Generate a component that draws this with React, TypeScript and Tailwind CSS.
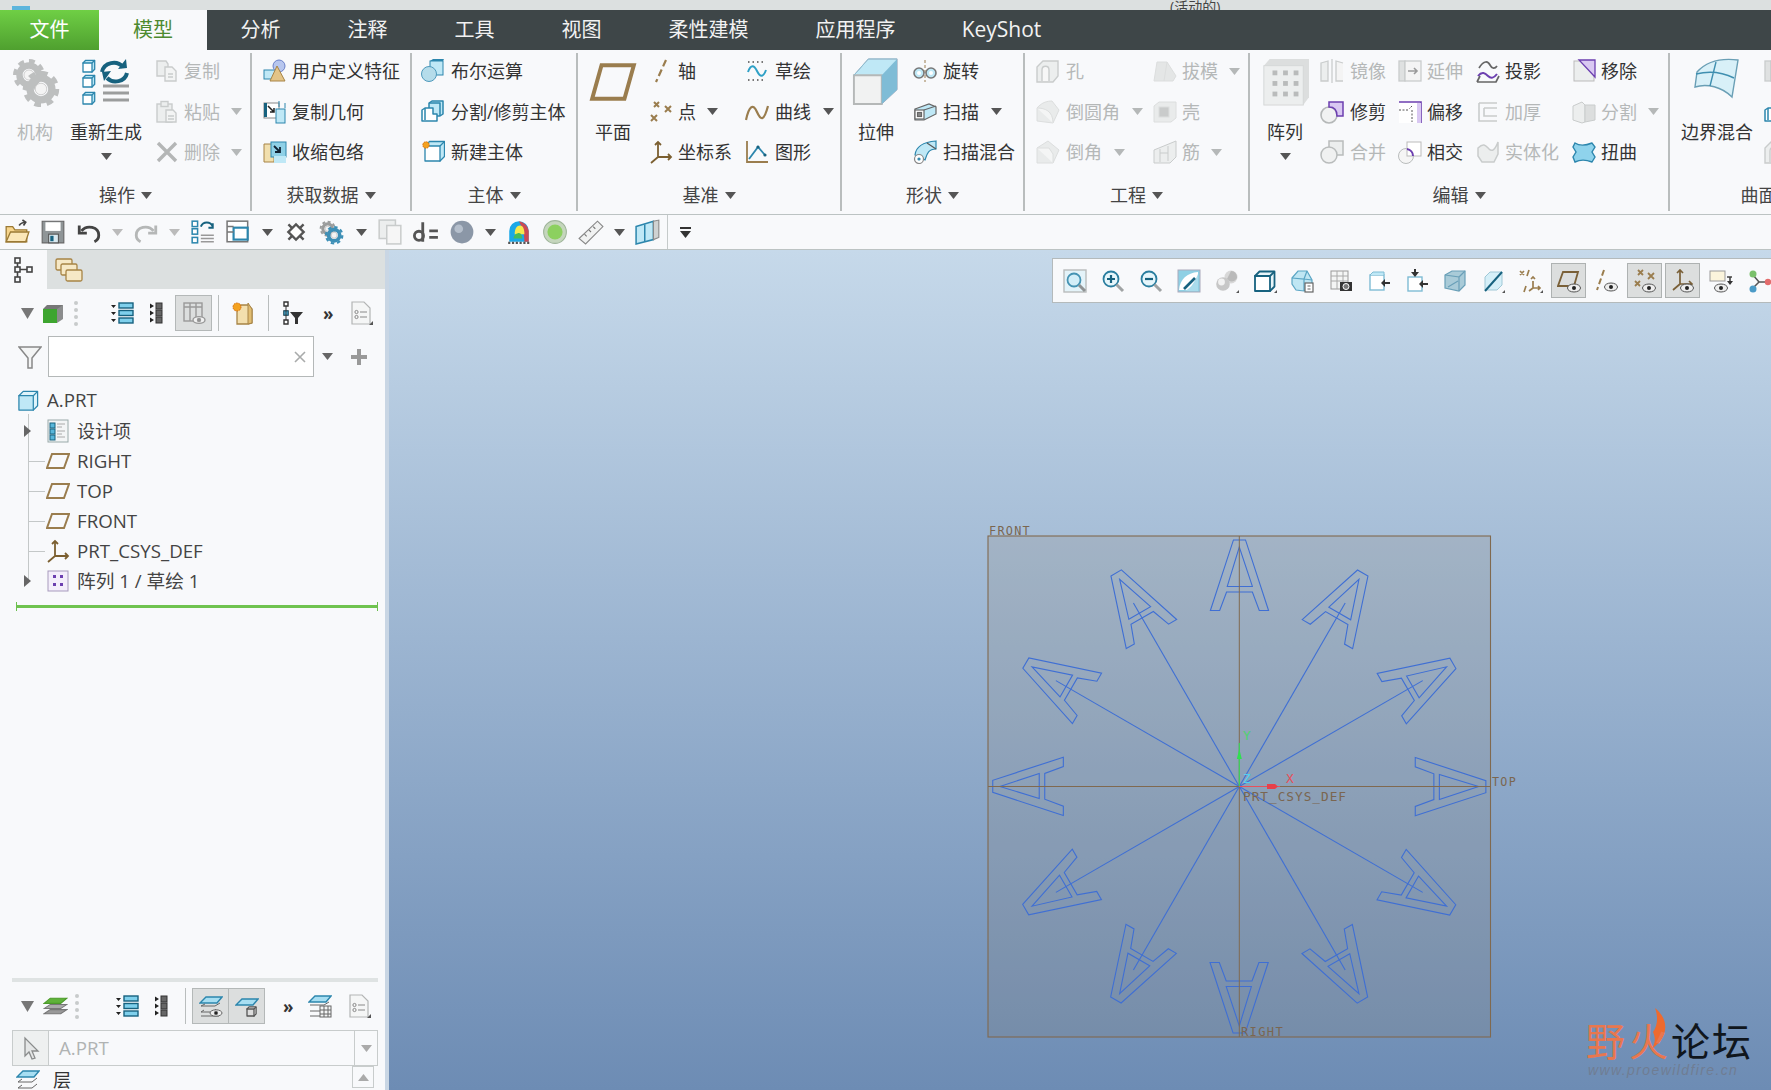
import React from "react";

const BL = "#2c86ad", DB = "#17627f", LB = "#bfe8f6", GR = "#c9cccc", LG = "#eceeee", BR = "#9a7d4e", PU = "#6c3fb0", LP = "#d9c8f2";

const S = ({ s = 24, v = 24, children }: { s?: number; v?: number; children: React.ReactNode }) => (
  <svg width={s} height={s} viewBox={`0 0 ${v} ${v}`} className="shrink-0" fill="none">{children}</svg>
);

const Cube = ({ x, y, w, f = "#fff", st = BL, t = LB, sw = 1.3 }: { x: number; y: number; w: number; f?: string; st?: string; t?: string; sw?: number }) => {
  const d = w * 0.3;
  return (
    <g stroke={st} strokeWidth={sw} strokeLinejoin="round">
      <path d={`M${x} ${y}l${d} ${-d}h${w}v${w}l${-d} ${d}z`} fill={t} />
      <rect x={x} y={y} width={w} height={w} fill={f} />
      <path d={`M${x + w} ${y}l${d} ${-d}`} />
    </g>
  );
};

const Caret = ({ c = "#555" }: { c?: string }) => (
  <svg width="11" height="7" viewBox="0 0 11 7" className="shrink-0"><path d="M0 0h11L5.5 7z" fill={c} /></svg>
);

const Gear = ({ x, y, r, c = "#bdbfbf" }: { x: number; y: number; r: number; c?: string }) => (
  <g>
    <circle cx={x} cy={y} r={r} stroke={c} strokeWidth={r * 0.28} strokeDasharray={`${r * 0.42} ${r * 0.36}`} />
    <circle cx={x} cy={y} r={r * 0.68} stroke={c} strokeWidth={r * 0.46} />
    <circle cx={x} cy={y} r={r * 0.36} fill="#f4f4f4" stroke="#d0d0d0" />
  </g>
);

const Corner = () => <path d="M24 21v3h-3z" fill="#555" />;

const icons: Record<string, React.ReactNode> = {
  copy: <g stroke={GR} strokeWidth="1.4" fill={LG}><path d="M2 2h9l2 3v12H2z" /><path d="M10 8h7l4 4v10H10z" fill="#f3f4f4" /><path d="M13 15h5M13 18h5" /></g>,
  paste: <g stroke={GR} strokeWidth="1.4" fill={LG}><rect x="2" y="4" width="15" height="18" /><rect x="6" y="1.5" width="7" height="5" /><path d="M11 10h7l3 3v9H11z" fill="#f3f4f4" /><path d="M13 16h6M13 19h6" /></g>,
  del: <path d="M3 3l18 18M21 3L3 21" stroke="#b4b6b6" strokeWidth="3.4" />,
  udf: <g><rect x="1" y="11" width="12" height="9" fill={LB} stroke={BL} /><circle cx="16" cy="7" r="6" fill="#b7c6ee" stroke="#6a80c8" /><path d="M14 7L7 22h15z" fill="#e3c487" stroke="#a78446" /></g>,
  cgeom: <g><rect x="1" y="3" width="15" height="15" fill="#fff" stroke="#888" /><path d="M5 6l6 6M11 8v4H7" stroke="#222" strokeWidth="1.5" /><path d="M1 3v14h3V3z" fill={DB} /><rect x="13" y="9" width="9" height="14" fill={LB} stroke={BL} /><path d="M16 1v6M22 3v5" stroke={BL} /></g>,
  shrink: <g><path d="M1 4h10v18H1z" fill="#f1dfae" stroke="#a78446" /><rect x="8" y="2" width="15" height="15" fill="#8fd0e6" stroke={BL} /><path d="M11 6l6 6M17 7v5h-5" stroke="#123" strokeWidth="1.8" /><rect x="11" y="16" width="12" height="7" fill={LB} /></g>,
  bool: <g><rect x="9" y="2" width="13" height="14" fill={LB} stroke={BL} /><path d="M9 2l3-2h11l-1 2z" fill={BL} /><circle cx="8" cy="15" r="7.5" fill="#b5dcea" stroke="#4f9abc" /></g>,
  split: <g stroke={BL} strokeWidth="1.5" strokeLinejoin="round"><path d="M8 3l3-2h11v13l-3 2H8z" fill={LB} /><path d="M1 10l3-2h8v6l4 0v7H1z" fill="#fff" /><path d="M4 8v12M8 3h11v13" /></g>,
  newb: <g><Cube x={4} y={6} w={15} /><circle cx="5" cy="5" r="3.2" fill="#f4a21f" stroke="#d36b12" strokeDasharray="1.5 1" /></g>,
  axis: <path d="M17 1l-10 22" stroke={BR} strokeWidth="2.2" strokeDasharray="7 3.5" />,
  pt: <g stroke={BR} strokeWidth="2"><path d="M5 2l5 5M10 2l-5 5M16 6l6 6M22 6l-6 6M2 15l6 6M8 15l-6 6" /></g>,
  csys: <g stroke="#7b5f30" strokeWidth="1.8"><path d="M9 2v15L22 17M9 17L2 23" /><path d="M6 5l3-3 3 3" /><path d="M19 14l3 3-3 3" /></g>,
  sketch: <g><path d="M3 3h18M3 21h18M3 12h1M20 12h1" stroke="#777" strokeWidth="2" strokeDasharray="1.5 3" /><path d="M3 13c3-8 6-7 9-1s6 7 9-1" stroke="#2ea0c6" strokeWidth="2" /></g>,
  curve: <path d="M1 20C4 6 8 3 12 12s7 9 11-6" stroke={BR} strokeWidth="2.2" />,
  graph: <g><path d="M2 1v21h21" stroke={BR} strokeWidth="1.8" /><path d="M4 19l9-12 7 8" stroke={BL} strokeWidth="1.8" /><circle cx="13" cy="7" r="1.6" fill={DB} /><circle cx="20" cy="15" r="1.6" fill={DB} /></g>,
  rev: <g><path d="M12 1v22" stroke="#9a7d4e" strokeDasharray="3 2" /><ellipse cx="6" cy="14" rx="5" ry="5" fill={LB} stroke="#777" strokeWidth="1.6" /><ellipse cx="18" cy="14" rx="5" ry="5" fill={LB} stroke="#777" strokeWidth="1.6" /><circle cx="6" cy="14" r="2" fill="#fff" /><circle cx="18" cy="14" r="2" fill="#fff" /></g>,
  sweep: <g stroke="#666" strokeWidth="1.2"><path d="M2 9l14-5 7 3v7l-12 6H2z" fill={LB} /><rect x="2" y="10" width="9" height="9" fill="#fff" /><rect x="4.5" y="12.5" width="4" height="4" fill="#888" /><path d="M11 10l12-4" /></g>,
  swb: <g stroke={BL} strokeWidth="1.2"><path d="M2 15C3 6 10 2 23 1v8c-8 0-9 5-11 11z" fill={LB} /><circle cx="6" cy="19" r="4.5" fill="#fff" stroke="#888" /><circle cx="6" cy="19" r="1" fill="#888" /><path d="M14 3l9 6" stroke="#555" /></g>,
  hole: <g stroke={GR} strokeWidth="1.4" fill={LG}><path d="M1 8l6-6h15v15l-5 6H1z" /><path d="M6 22V11c0-5 7-5 7 0v11" fill="#f7f7f7" /></g>,
  round: <g stroke="#dcdede" fill="#e9ebeb"><path d="M1 8C6 2 12 1 16 1l7 9-6 13L1 21z" /><path d="M1 8c8 0 16 3 16 15" fill="#f4f5f5" /></g>,
  cham: <g stroke="#dcdede" fill="#e9ebeb"><path d="M1 8l11-7 11 9-6 13H1z" /><path d="M1 8h12l4 6v9" fill="#f4f5f5" /></g>,
  draft: <g stroke="#dcdede" fill="#e4e6e6"><path d="M4 3h10l9 14-3 5H1z" /><path d="M14 3l-3 19" /></g>,
  shell: <g stroke="#dcdede" fill="#e9ebeb"><path d="M1 6l5-4h17v16l-5 4H1z" /><rect x="6" y="7" width="10" height="10" fill="#c9cbcb" /></g>,
  rib: <g stroke={GR} fill="#eceeee"><path d="M1 10l22-9v16l-6 6H1z" /><path d="M7 9v13M15 6v15M7 13l8 0" /></g>,
  mirror: <g stroke={GR} strokeWidth="1.3"><path d="M1 4l7-2v20H1z" fill={LG} /><path d="M12 0v24" /><path d="M23 4l-7-2v20h7" fill="#f4f4f4" /></g>,
  extend: <g stroke={GR} strokeWidth="1.3"><rect x="1" y="2" width="6" height="20" fill="#dfe1e1" /><rect x="7" y="2" width="16" height="20" fill="#f4f4f4" /><path d="M10 12h9M16 9l3 3-3 3" stroke="#9a9a9a" strokeWidth="1.6" /></g>,
  project: <g strokeWidth="1.7"><path d="M3 9C8 1 12 2 14 6s5 4 7 1" stroke="#666" /><path d="M2 17c4-5 7-3 10 0s6 2 9-2" stroke={PU} strokeWidth="2" /><path d="M1 23l3-6M23 17l-3 6H1" stroke="#666" /></g>,
  remove: <g><rect x="2" y="2" width="20" height="20" fill={LG} stroke="#bbb" /><path d="M7 1h16v17z" fill={LP} stroke={PU} strokeWidth="1.3" /></g>,
  trim: <g><circle cx="9" cy="15" r="8" stroke="#b5b8b8" strokeWidth="1.6" fill="#f1f2f2" /><path d="M9 2h14v14H17C17 10 14 7 9 7z" fill={LP} stroke={PU} strokeWidth="1.5" /></g>,
  offs: <g><rect x="1" y="2" width="22" height="21" fill="#fff" /><path d="M1 2h22v21" stroke={PU} strokeWidth="1.6" /><rect x="19" y="3" width="4" height="20" fill={LP} /><path d="M1 10h10M14 6l-3 3M14 10v12" stroke="#555" strokeDasharray="2 1.5" /></g>,
  thick: <path d="M3 3h18M3 3v18h18M8 8h13M8 8v8h13" stroke={GR} strokeWidth="1.6" />,
  sgeom: <g stroke={GR} fill={LG}><path d="M1 6l9-4 3 3v17l-3 1-9-3z" /><path d="M13 5l10 0v15l-10 2z" fill="#dcdede" /></g>,
  merge: <g stroke="#b9bcbc" strokeWidth="1.5"><rect x="9" y="1" width="14" height="14" fill={LG} /><circle cx="9" cy="15" r="8" fill="#f0f1f1" /></g>,
  inter: <g><circle cx="8" cy="16" r="7.5" stroke="#b9bcbc" fill="#f5f5f5" /><rect x="9" y="2" width="14" height="14" fill="#fff" stroke="#bbb" /><path d="M9 9a7 7 0 0 1 6 7" stroke={PU} strokeWidth="2" /></g>,
  solid: <g stroke={GR} strokeWidth="1.5"><path d="M2 8C8 2 10 6 13 9s6 1 9-7v12l-4 8H6L2 16z" fill={LG} /></g>,
  warp: <path d="M3 3c6 4 12 2 17 0l3 4-3 5 3 5-3 5c-5-2-11-3-17 0l-2-5 3-5-3-5z" fill="#8fd3ec" stroke={BL} strokeWidth="1.4" />,
  open: <g><path d="M2 7h6l2 3h11v11H2z" fill="#f7d58c" stroke="#9b7a35" strokeWidth="1.2" /><path d="M2 21l4-9h17l-3 9z" fill="#fbe7b8" stroke="#9b7a35" strokeWidth="1.2" /><path d="M14 6c2-3 4-3 6-3M17 1l3 2-2 3" stroke="#444" strokeWidth="1.6" /></g>,
  save: <g><path d="M2 2h20v20H2z" fill="#8f9597" stroke="#666" /><rect x="5" y="3" width="14" height="8" fill="#fff" /><rect x="8" y="14" width="9" height="8" fill="#d9e9f0" stroke="#555" /><rect x="9.5" y="15.5" width="3" height="5" fill={DB} /></g>,
  undo: <g stroke="#444" strokeWidth="2.6"><path d="M5 11c5-6 16-4 16 4 0 3-2 5-4 6" /><path d="M3 6v7h7" /></g>,
  redo: <g stroke="#b5b7b7" strokeWidth="2.6"><path d="M19 11C14 5 3 7 3 15c0 3 2 5 4 6" /><path d="M21 6v7h-7" /></g>,
  regen: <g><rect x="2" y="2" width="5" height="5" fill="#fff" stroke={BL} strokeWidth="1.4" /><rect x="2" y="9" width="5" height="5" fill="#fff" stroke={BL} strokeWidth="1.4" /><rect x="2" y="17" width="5" height="5" fill="#fff" stroke={BL} strokeWidth="1.4" /><path d="M10 7c2-5 9-5 11 0M21 4v4h-4" stroke={DB} strokeWidth="1.8" /><path d="M10 15h12M10 18h12M10 21h12" stroke="#999" strokeWidth="1.4" /></g>,
  win: <g stroke="#777" strokeWidth="1.4"><rect x="1" y="2" width="19" height="19" fill="#fff" /><rect x="7" y="8" width="13" height="11" fill="#fff" stroke={BL} strokeWidth="2" /><path d="M1 7h6M1 12h6" /></g>,
  xclose: <g stroke="#555" strokeWidth="2.2"><path d="M5 5l14 14M19 5L5 19" /><rect x="7" y="7" width="10" height="10" fill="#fff" stroke="#555" transform="rotate(45 12 12)" /></g>,
  sets: <g><Gear x={8} y={9} r={6.5} c="#9a9c9c" /><Gear x={14} y={15} r={7.5} c="#3d8fb6" /></g>,
  cdoc: <g stroke={GR} strokeWidth="1.4"><rect x="2" y="1" width="15" height="17" fill={LG} /><rect x="9" y="6" width="13" height="17" fill="#f6f6f6" /></g>,
  deq: <g stroke="#555" strokeWidth="2.6"><path d="M9 3v18" /><circle cx="5.5" cy="15.5" r="4.2" /><path d="M15 11h8M15 17h8" /></g>,
  sph: <g><circle cx="12" cy="12" r="10.5" fill="#8b97a7" /><circle cx="9" cy="9" r="4" fill="#b5bfcc" /></g>,
  color: <g><path d="M3 21V11a9 9 0 0 1 18 0v10z" fill="#1ba8e8" /><path d="M12 2c5 1 8 4 9 9v10h-4c0-8-2-13-5-19z" fill="#ea3a3a" opacity=".85" /><path d="M8 14c0-5 2-8 5-8 3 0 4 4 4 8z" fill="#f6e84e" /><path d="M7 18c0-3 3-5 5-5 2 0 3 3 3 5z" fill="#47bb5a" /><path d="M2 22h20" stroke="#555" strokeWidth="2" strokeDasharray="2 1.5" /></g>,
  gsph: <g><circle cx="12" cy="12" r="10.5" fill="#c5d6bd" stroke="#9fb59a" /><circle cx="12" cy="12" r="7" fill="#8cd05f" /></g>,
  ruler: <g><path d="M1 18L18 2l5 5L7 23z" fill="#f1f2f2" stroke="#888" /><path d="M6 14l2 2M10 10l2 2M14 7l2 2" stroke="#777" /></g>,
  vcube: <g><path d="M1 7l16-5v17L1 23z" fill={LB} stroke={BL} strokeWidth="1.4" /><path d="M9 5v16" stroke={BL} strokeWidth="1.4" /><path d="M17 2l5-1v16l-5 2z" fill="#cfd2d2" stroke="#888" /></g>,
  part: <Cube x={2} y={7} w={15} f={LB} t="#dff4fb" />,
  design: <g><rect x="2" y="1" width="20" height="22" fill="#f3f5f6" stroke="#9aa" /><rect x="4" y="4" width="5" height="5" fill="#58b6da" stroke={DB} /><rect x="4" y="10" width="5" height="5" fill="#58b6da" stroke={DB} /><rect x="4" y="16" width="5" height="5" fill="#58b6da" stroke={DB} /><path d="M11 5h8M11 8h5M11 12h8M11 15h5M11 18h8" stroke="#aaa" /></g>,
  plane: <path d="M6 5H23L18 19H1z" stroke={BR} strokeWidth="2" />,
  pat: <g><rect x="2" y="2" width="20" height="20" fill="#f4eefb" stroke="#a79bbd" /><path d="M7 6h3v3H7zM14 6h3v3h-3zM7 14h3v3H7zM14 14h3v3h-3z" fill="#6c3fb0" /></g>,
  tree1: <g><path d="M1 4h5L3.5 7zM1 11h5L3.5 14zM1 18h5L3.5 21z" fill="#222" /><rect x="9" y="2" width="14" height="5" fill="#7fd0ec" stroke={DB} strokeWidth="1.4" /><rect x="9" y="9.5" width="14" height="5" fill="#7fd0ec" stroke={DB} strokeWidth="1.4" /><rect x="9" y="17" width="14" height="5" fill="#7fd0ec" stroke={DB} strokeWidth="1.4" /></g>,
  tree2: <g><path d="M5 2.5L9 5l-4 2.5zM5 9.5L9 12l-4 2.5zM5 16.5L9 19l-4 2.5z" fill="#222" /><rect x="11" y="2" width="6" height="6" fill="#666" stroke="#333" /><rect x="11" y="9" width="6" height="6" fill="#666" stroke="#333" /><rect x="11" y="16" width="6" height="6" fill="#666" stroke="#333" /></g>,
  cols: <g stroke="#999" strokeWidth="1.4"><rect x="2" y="2" width="18" height="18" fill="#dcdede" /><path d="M2 6h18M8 2v18M14 2v18" /><ellipse cx="17" cy="19" rx="6" ry="3.4" fill="#f0f0f0" /><circle cx="17" cy="19" r="1.5" fill="#888" /></g>,
  star: <g><path d="M6 4h11l4 4v14l-4 1H6z" fill="#f3dfae" stroke="#a78446" strokeWidth="1.3" /><path d="M17 2l4 6v14l-4 1z" fill="#e1bd72" stroke="#a78446" /><circle cx="6" cy="6" r="4" fill="#f4a21f" stroke="#d36b12" strokeDasharray="1.5 1" /></g>,
  tfilter: <g><path d="M4 1h4v4H4zM4 10h4v4H4zM4 19h4v4H4z" fill="#fff" stroke="#333" strokeWidth="1.4" /><rect x="4" y="10" width="4" height="4" fill="#58b6da" stroke={DB} /><path d="M6 5v14" stroke="#333" /><path d="M10 11h13l-5 6v6h-3v-6z" fill="#333" /></g>,
  doc: <g><path d="M3 1h12l6 6v16H3z" fill="#f5f6f6" stroke="#b3b5b5" strokeWidth="1.2" /><circle cx="7.5" cy="11" r="1.6" stroke="#888" /><circle cx="7.5" cy="16" r="1.6" stroke="#888" /><path d="M11 11h7M11 16h7" stroke="#888" /><path d="M24 20v4h-4z" fill="#555" /></g>,
  funnel: <g stroke="#888" strokeWidth="1.5"><path d="M1 2h22l-9 11v10h-4V13z" fill="#f4f5f5" /></g>,
  layers: <g><path d="M1 19l6-4h16l-6 4z" fill="#999" stroke="#777" /><path d="M1 14l6-4h16l-6 4z" fill="#aaa" stroke="#777" /><path d="M1 9l6-5h16l-6 5z" fill="#5fb23a" stroke="#4b9a2a" /></g>,
  l1: <g stroke="#666"><path d="M1 9l6-6h16l-5 6z" fill="#a7def2" stroke={BL} strokeWidth="1.4" /><path d="M2 12h14l5-3M2 12l4-2M2 18h12l3-3M2 18l3-2M2 22h18" /><ellipse cx="17" cy="19" rx="6" ry="3.2" fill="#eee" /><circle cx="17" cy="19" r="1.7" fill="#222" /></g>,
  l2: <g><path d="M1 11l6-6h16l-5 6z" fill="#a7def2" stroke={BL} strokeWidth="1.4" /><Cube x={12} y={15} w={7} f="#ddd" st="#555" t="#eee" /></g>,
  l3: <g stroke="#666"><path d="M1 8l6-6h16l-5 6z" fill="#a7def2" stroke={BL} strokeWidth="1.4" /><path d="M2 11h14l5-3M2 17h10M2 22h10" /><rect x="12" y="12" width="11" height="11" fill="#f4f5f5" /><path d="M12 16h11M12 20h11M16 12v11M20 12v11" /></g>,
  layerRow: <g stroke="#666"><path d="M1 8l6-6h16l-5 6z" fill="#a7def2" stroke={BL} strokeWidth="1.4" /><path d="M2 13h14l5-4M2 13l4-3M2 19h14l5-4M2 19l4-3" /></g>,
  arrow: <path d="M6 2v18l4-4 3 7 3-1-3-7h6z" fill="#e4e6e6" stroke="#8a8c8c" strokeWidth="1.3" />,
  fit: <g><rect x="1" y="1" width="22" height="22" fill="#e4f3f9" stroke="#b9bcbc" strokeWidth="1.4" /><circle cx="11" cy="11" r="6.5" fill="#d3eef8" stroke="#4593b3" strokeWidth="1.8" /><path d="M16 16l6 6" stroke="#8f9293" strokeWidth="3" /></g>,
  zin: <g><circle cx="10" cy="10" r="7.5" fill="#e6f6fb" stroke="#2a7e9f" strokeWidth="1.8" /><path d="M15.5 15.5L22 22" stroke="#a0a3a4" strokeWidth="3" /><path d="M6 10h8M10 6v8" stroke={DB} strokeWidth="2.2" /></g>,
  zout: <g><circle cx="10" cy="10" r="7.5" fill="#e6f6fb" stroke="#2a7e9f" strokeWidth="1.8" /><path d="M15.5 15.5L22 22" stroke="#a0a3a4" strokeWidth="3" /><path d="M6 10h8" stroke={DB} strokeWidth="2.2" /></g>,
  rep: <g><rect x="1" y="1" width="22" height="22" fill="#8fd0e4" stroke="#aab" /><path d="M2 21C3 10 10 4 21 3v18z" fill="#fff" /><path d="M21 5L21 22H7c5-1 10-7 14-17z" fill="#a9dcec" /><path d="M7 20L18 9" stroke={DB} strokeWidth="2.6" /></g>,
  shade: <g><circle cx="16" cy="8" r="6.5" fill="#d8d8d8" /><path d="M16 2c4 0 6 3 6 7-3 5-8 4-10 1" fill="#9b9b9b" opacity=".5" /><circle cx="8" cy="15" r="6.8" fill="#c7c7c7" /><circle cx="6.5" cy="13" r="3.4" fill="#f2f2f2" /><Corner /></g>,
  view: <g><Cube x={2} y={7} w={15} st={DB} t="#e8f5f9" sw={1.8} /><Corner /></g>,
  nview: <g stroke="#5aa5c4" strokeWidth="1.2"><path d="M1 9l6-7h9l5 9v7l-8 4-8-1-4-6z" fill="#bfe6f3" /><path d="M1 9l12 1 3-8M13 10l8 1M13 10v12" /><rect x="14" y="14" width="8" height="9" fill="#fff" stroke="#666" /><path d="M16.5 17h3M16.5 20h3" stroke="#666" /></g>,
  snap: <g><rect x="2" y="2" width="17" height="18" fill="#f4f5f5" stroke="#999" /><path d="M2 7h17M2 12h17M8 2v18M14 2v18" stroke="#aaa" /><rect x="11" y="13" width="12" height="9" fill="#333" /><circle cx="17" cy="17.5" r="3" fill="#777" stroke="#fff" /></g>,
  pers1: <g><rect x="3" y="6" width="14" height="15" fill="#fff" stroke="#7fbcd4" strokeWidth="1.4" /><path d="M3 6l3-3h11v3" fill={LB} stroke="#7fbcd4" /><path d="M15 14h8" stroke="#333" strokeWidth="2" /><path d="M18 10l-4 4 4 4" fill="#333" /></g>,
  pers2: <g><rect x="3" y="8" width="14" height="14" fill="#fff" stroke="#7fbcd4" strokeWidth="1.4" /><path d="M15 15h8" stroke="#333" strokeWidth="2" /><path d="M18 11l-4 4 4 4" fill="#333" /><path d="M10 0v6" stroke="#333" strokeWidth="2" /><path d="M6 3l4 5 4-5" fill="#333" /></g>,
  glass: <g stroke="#6aa0b8" strokeWidth="1.2"><path d="M2 6l7-4h13v14l-6 6-14-3z" fill="#a9cbd8" /><path d="M2 6l14 2v14M16 8l6-6M5 18l10-6" /></g>,
  vsec: <g><path d="M4 8l5-5h12v13l-5 5H4z" fill="#d5eff8" stroke="#9fc8d6" /><path d="M4 22L21 3" stroke={DB} strokeWidth="2" /><Corner /></g>,
  xyz: <g stroke={BR} strokeWidth="1.7"><path d="M1 2l4 4M5 2L1 6M10 1L8 7M5 23l2-6M14 12v7l7 0M14 19l-4 3M12 10l2-2 2 2M19 17l2 2-2 2" /><path d="M24 21v3h-3z" fill="#555" stroke="none" /></g>,
  eyeP: <g><path d="M6 3h15l-4 14H1z" stroke="#7a6038" strokeWidth="1.8" /><ellipse cx="17" cy="19" rx="6.5" ry="4" fill="#eee" stroke="#555" /><circle cx="17" cy="19" r="2" fill="#222" /></g>,
  eyeA: <g><path d="M9 1l-7 20" stroke={BR} strokeWidth="2" strokeDasharray="6 3" /><ellipse cx="16" cy="18" rx="6.5" ry="4" fill="#eee" stroke="#555" /><circle cx="16" cy="18" r="2" fill="#222" /></g>,
  eyeX: <g><path d="M5 1l5 5M10 1L5 6M15 4l6 6M21 4l-6 6M2 12l5 5M7 12l-5 5" stroke={BR} strokeWidth="1.8" /><ellipse cx="16" cy="19" rx="6.5" ry="4" fill="#eee" stroke="#555" /><circle cx="16" cy="19" r="2" fill="#222" /></g>,
  eyeC: <g><path d="M9 1v14L2 21M9 15h11M6 4l3-3 3 3M18 12l3 3-3 3" stroke="#7a6038" strokeWidth="1.7" /><ellipse cx="16" cy="19" rx="6.5" ry="4" fill="#eee" stroke="#555" /><circle cx="16" cy="19" r="2" fill="#222" /></g>,
  ann: <g><rect x="1" y="2" width="15" height="10" fill="#fbf4dc" stroke="#999" /><path d="M18 8h5M21 8v5" stroke="#444" strokeWidth="1.6" /><path d="M18 12l3 4 3-4" fill="#333" /><ellipse cx="12" cy="19" rx="6.5" ry="4" fill="#eee" stroke="#555" /><circle cx="12" cy="19" r="2" fill="#222" /></g>,
  node: <g><path d="M6 6l6 7-6 6M12 13h9" stroke="#555" strokeWidth="1.5" /><circle cx="6" cy="5" r="3.5" fill="#7ac06b" /><circle cx="21" cy="13" r="3.2" fill="#e36c6c" /><circle cx="6" cy="20" r="3.5" fill="#4b9bc7" /></g>,
};

const I = ({ n, s = 24 }: { n: string; s?: number }) => <S s={s}>{icons[n]}</S>;

const Row = ({ n, t, dis, caret, gap = "gap-[5px]", cg = "ml-[6px]" }: { n: string; t: string; dis?: boolean; caret?: boolean; gap?: string; cg?: string }) => (
  <div className={`flex items-center h-[36px] ${gap} ${dis ? "text-[#b5b8b8]" : "text-[#333]"}`}>
    <I n={n} />
    {t ? <span className="whitespace-nowrap leading-[24px]">{t}</span> : null}
    {caret && <div className={cg}><Caret c={dis ? "#b5b8b8" : "#555"} /></div>}
  </div>
);

const Col = ({ w, pl = "", children }: { w: string; pl?: string; children: React.ReactNode }) => (
  <div className={`flex flex-col gap-[4.5px] shrink-0 ${w} ${pl}`}>{children}</div>
);

const Big = ({ w, t, dis, caret, children }: { w: string; t: string; dis?: boolean; caret?: boolean; children: React.ReactNode }) => (
  <div className={`flex flex-col items-center shrink-0 ${w} ${dis ? "text-[#b5b8b8]" : "text-[#333]"}`}>
    <div className="h-[48px] mt-[5px] flex items-center justify-center">{children}</div>
    <div className="mt-[14px] h-[24px] leading-[24px] whitespace-nowrap">{t}</div>
    {caret && <div className="mt-[9px]"><Caret /></div>}
  </div>
);

const Group = ({ w, label, children, last }: { w: string; label: string; children: React.ReactNode; last?: boolean }) => (
  <div className={`${w} shrink-0 h-[158px] flex flex-col ${last ? "" : "border-r-2 border-[#b9bdbd]"}`}>
    <div className="flex-1 flex min-h-0">{children}</div>
    <div className="h-[32px] flex items-center justify-center gap-[6px] text-[#444]">
      <span className="leading-[24px]">{label}</span><Caret />
    </div>
  </div>
);

const tabs: [string, string][] = [["分析", "w-[107px]"], ["注释", "w-[107px]"], ["工具", "w-[107px]"], ["视图", "w-[107px]"], ["柔性建模", "w-[147px]"], ["应用程序", "w-[147px]"]];

const QBar = () => (
  <div className="h-[36px] shrink-0 bg-[#f8f9fb] border-y border-[#bcc3c3] flex items-center pl-[4px] gap-[10.05px]">
    <I n="open" s={26} /><I n="save" s={26} /><I n="undo" s={26} /><Caret c="#bbb" /><I n="redo" s={26} /><Caret c="#bbb" />
    <I n="regen" s={26} /><I n="win" s={26} /><Caret /><I n="xclose" s={26} /><I n="sets" s={26} /><Caret /><I n="cdoc" s={26} /><I n="deq" s={26} /><I n="sph" s={26} /><Caret /><I n="color" s={26} /><I n="gsph" s={26} /><I n="ruler" s={26} /><Caret /><I n="vcube" s={26} />
    <div className="w-px h-full bg-[#c5caca] -ml-[4px]" />
    <div className="flex flex-col items-center gap-[2px] ml-[2px]"><div className="w-[11px] h-[2px] bg-[#333]" /><Caret c="#333" /></div>
  </div>
);

const TreeRow = ({ n, t, exp, line = true, latin }: { n: string; t: string; exp?: boolean; line?: boolean; latin?: boolean }) => (
  <div className="h-[30px] flex items-center relative pl-[46px]">
    {line && <div className="absolute left-[28px] top-[15px] w-[17px] h-px bg-[#c4c8c8]" />}
    {exp && <div className="absolute left-[24px] top-[9px] w-0 h-0 border-y-[6px] border-y-transparent border-l-[7px] border-l-[#666]" />}
    <I n={n} s={24} />
    <span className={`ml-[7px] whitespace-nowrap ${latin ? "text-[18.7px]" : ""}`}>{t}</span>
  </div>
);

const Dots = () => <div className="flex flex-col gap-[3px]">{[0, 1, 2, 3].map(i => <div key={i} className="w-[4px] h-[4px] rounded-full bg-[#c8cbcb]" />)}</div>;

const Panel = () => (
  <div className="w-[389px] shrink-0 h-full flex flex-col bg-[#f8f9fb] border-r-4 border-[#c9d6e4] text-[#444] text-[18px] overflow-hidden">
    <div className="h-[39px] shrink-0 bg-[#dce0e0] flex">
      <div className="w-[47px] bg-[#f8f9fb] flex items-center justify-center">
        <svg width="20" height="26" viewBox="0 0 20 26" fill="none" stroke="#444" strokeWidth="1.6"><rect x="1" y="1" width="5" height="5" /><rect x="1" y="10" width="5" height="5" /><rect x="1" y="20" width="5" height="5" /><rect x="13" y="10" width="5" height="5" /><path d="M3.5 6v4M3.5 15v5M6 12.5h7" /></svg>
      </div>
      <div className="ml-[8px] flex items-center">
        <svg width="28" height="26" viewBox="0 0 28 26" stroke="#a78446" fill="#f6e8c6" strokeWidth="1.3"><rect x="1" y="2" width="16" height="11" rx="1.5" /><rect x="6" y="7" width="16" height="11" rx="1.5" /><rect x="11" y="13" width="16" height="11" rx="1.5" /></svg>
      </div>
    </div>
    <div className="h-[48px] shrink-0 flex items-center">
      <div className="ml-[21px]"><svg width="13" height="11" viewBox="0 0 13 11"><path d="M0 0h13L6.5 11z" fill="#777" /></svg></div>
      <div className="ml-[9px]"><svg width="21" height="21" viewBox="0 0 21 21"><path d="M0 6l4-4h16l-1 4z" fill="#777" /><rect x="0" y="6" width="14" height="14" fill="#3da52f" /><path d="M14 6l6-4v14l-6 4z" fill="#8b8d8d" /></svg></div>
      <div className="ml-[10px]"><Dots /></div>
      <div className="ml-[32px]"><I n="tree1" /></div>
      <div className="ml-[11px]"><I n="tree2" /></div>
      <div className="ml-[6px] w-[37px] h-[36px] bg-[#dcdede] border border-[#b4b8b8] flex items-center justify-center"><I n="cols" /></div>
      <div className="ml-[6px] w-px h-[36px] bg-[#b9bdbd]" />
      <div className="ml-[12px]"><I n="star" /></div>
      <div className="ml-[13px] w-px h-[36px] bg-[#b9bdbd]" />
      <div className="ml-[11px]"><I n="tfilter" /></div>
      <div className="ml-[19px] text-[#333] text-[17px] leading-none font-bold">»</div>
      <div className="ml-[16px]"><I n="doc" /></div>
    </div>
    <div className="h-[41px] shrink-0 flex items-center mt-[-1px]">
      <div className="ml-[18px]"><I n="funnel" /></div>
      <div className="ml-[6px] w-[266px] h-[41px] bg-white border border-[#b4b8b8] flex items-center justify-end pr-[7px]">
        <svg width="12" height="12" viewBox="0 0 12 12" stroke="#a9abab" strokeWidth="1.6"><path d="M1 1l10 10M11 1L1 11" /></svg>
      </div>
      <div className="ml-[8px]"><Caret c="#666" /></div>
      <div className="ml-[18px]"><svg width="16" height="16" viewBox="0 0 16 16"><path d="M6 0h4v6h6v4h-6v6H6v-6H0V6h6z" fill="#999" /></svg></div>
    </div>
    <div className="relative mt-[7px]">
      <div className="absolute left-[28px] top-[30px] w-px h-[167px] bg-[#c4c8c8]" />
      <div className="h-[32px] flex items-center pl-[17px]"><I n="part" s={23} /><span className="ml-[7px] text-[18.7px]">A.PRT</span></div>
      <TreeRow n="design" t="设计项" exp line={false} />
      <TreeRow n="plane" t="RIGHT" latin />
      <TreeRow n="plane" t="TOP" latin />
      <TreeRow n="plane" t="FRONT" latin />
      <TreeRow n="csys" t="PRT_CSYS_DEF" latin />
      <TreeRow n="pat" t="阵列 1 / 草绘 1" exp line={false} latin />
    </div>
    <div className="ml-[16px] w-[362px] h-[9px] mt-[6px] flex items-center relative shrink-0 border-x border-[#6cbf4e]">
      <div className="w-full h-[3px] bg-[#6fc34f]" />
    </div>
    <div className="flex-1" />
    <div className="ml-[12px] w-[366px] h-[4px] bg-[#dfe3e3] shrink-0" />
    <div className="h-[48px] shrink-0 flex items-center">
      <div className="ml-[21px]"><svg width="13" height="11" viewBox="0 0 13 11"><path d="M0 0h13L6.5 11z" fill="#777" /></svg></div>
      <div className="ml-[9px]"><I n="layers" s={25} /></div>
      <div className="ml-[7px]"><Dots /></div>
      <div className="ml-[36px]"><I n="tree1" /></div>
      <div className="ml-[11px]"><I n="tree2" /></div>
      <div className="ml-[11px] w-px h-[36px] bg-[#b9bdbd]" />
      <div className="ml-[6px] flex border border-[#b4b8b8] bg-[#dcdede]">
        <div className="w-[36px] h-[34px] flex items-center justify-center border-r border-[#b4b8b8]"><I n="l1" /></div>
        <div className="w-[35px] h-[34px] flex items-center justify-center"><I n="l2" /></div>
      </div>
      <div className="ml-[18px] text-[#333] text-[17px] leading-none font-bold">»</div>
      <div className="ml-[15px]"><I n="l3" /></div>
      <div className="ml-[15px]"><I n="doc" /></div>
    </div>
    <div className="ml-[12px] w-[366px] h-[36px] shrink-0 border border-[#c8cccc] flex items-center text-[#b0b3b3]">
      <div className="w-[36px] h-full bg-[#eef0f0] border-r border-[#c8cccc] flex items-center justify-center"><I n="arrow" /></div>
      <span className="ml-[10px] flex-1 text-[18.7px]">A.PRT</span>
      <div className="w-[23px] h-full border-l border-[#c8cccc] flex items-center justify-center"><Caret c="#aaa" /></div>
    </div>
    <div className="ml-[16px] flex items-start h-[24px] overflow-hidden">
      <div className="mt-[3px]"><I n="layerRow" s={24} /></div>
      <span className="ml-[13px] text-[#333] leading-[28px]">层</span>
      <div className="ml-auto w-[22px] h-[22px] mr-[11px] border border-[#c8cccc] flex items-center justify-center"><svg width="11" height="7" viewBox="0 0 11 7"><path d="M0 7h11L5.5 0z" fill="#aaa" /></svg></div>
    </div>
  </div>
);

const FloatBar = () => {
  const items: [string, boolean][] = [["fit", false], ["zin", false], ["zout", false], ["rep", false], ["shade", false], ["view", false], ["nview", false], ["snap", false], ["pers1", false], ["pers2", false], ["glass", false], ["vsec", false], ["xyz", false], ["eyeP", true], ["eyeA", false], ["eyeX", true], ["eyeC", true], ["ann", false], ["node", false]];
  return (
    <div className="absolute left-[663px] top-[8px] h-[45px] w-[760px] bg-[#f8f9fb] border border-[#b4babb] flex items-center pl-[4px]">
      {items.map(([n, on], i) => (
        <div key={i} className={`w-[35px] h-[35px] mr-[3px] shrink-0 flex items-center justify-center ${on ? "bg-[#dcdede] border border-[#aeb2b2]" : ""}`}><I n={n} s={24} /></div>
      ))}
    </div>
  );
};

const Drawing = () => {
  const k = 1 / 2.904;
  const angles = [0, 30, 60, 90, 120, 150, 180, 210, 240, 270, 300, 330];
  const line = "#3f6fd4";
  return (
    <svg className="absolute inset-0 w-full h-full" viewBox="389 250 1382 840" fill="none">
      <rect x="988" y="536" width="502.5" height="501" fill="#8c7a5c" fillOpacity=".15" stroke="#80694f" strokeWidth="1.1" />
      <g transform="translate(1239.3 786.5)">
        {angles.map(a => (
          <g key={a} transform={`rotate(${a}) scale(${k})`} stroke={line} strokeWidth={1.1 / k}>
            <path d="M-84 -511L-57 -511L-37 -565L38 -565L58 -511L85 -511L18 -716L-17 -716Z" />
            <path d="M-35 -581L38 -581L0 -695Z" />
            {a % 90 !== 0 && <path d="M0 0V-615" />}
          </g>
        ))}
      </g>
      <path d="M1239.3 536V1037M988 786.5H1490.7" stroke="#80694f" strokeWidth="1" />
      <path d="M1239.3 786.5V743" stroke="#3bd45c" strokeWidth="1.2" />
      <path d="M1239.3 749l-2.5 10h5z" fill="#2fe050" />
      <path d="M1239.3 786.5H1280" stroke="#e8505a" strokeWidth="1.2" />
      <path d="M1267 784h8l3 2.5-3 2.5h-8z" fill="#e8404a" />
      <g fontFamily="'DejaVu Sans Mono', monospace" fontSize="13" stroke="none">
        <text x="989" y="535" fill="#7a6650" letterSpacing="1.4" textLength="42" lengthAdjust="spacingAndGlyphs">FRONT</text>
        <text x="1492" y="786" fill="#7a6650" letterSpacing="1.4" textLength="25" lengthAdjust="spacingAndGlyphs">TOP</text>
        <text x="1241" y="1036" fill="#7a6650" letterSpacing="1.4" textLength="43" lengthAdjust="spacingAndGlyphs">RIGHT</text>
        <text x="1243" y="801" fill="#7a6650" letterSpacing="1" textLength="104" lengthAdjust="spacingAndGlyphs">PRT_CSYS_DEF</text>
        <text x="1286" y="783" fill="#e5505a">X</text>
        <text x="1243" y="740" fill="#4fd26f">Y</text>
        <text x="1243" y="783" fill="#4fd0f0">Z</text>
      </g>
    </svg>
  );
};

const Watermark = () => (
  <div className="absolute right-[17px] bottom-[10px] w-[168px] h-[72px]">
    <svg className="absolute left-[57px] top-0" width="30" height="42" viewBox="0 0 30 42"><path d="M12 0c10 8 14 20 6 32-3 4-7 7-9 9 3-7 4-10 1-17 5-7 5-16 2-24z" fill="#ee6a2e" /></svg>
    <div className="absolute left-0 top-[11px] flex text-[39px] leading-[40px] font-['Noto_Sans_CJK_SC',sans-serif] whitespace-nowrap">
      <span className="text-[#e8774f] w-[43px]">野</span><span className="text-[#e8774f] w-[42px]">火</span><span className="text-[#10161d] w-[41px]">论</span><span className="text-[#10161d] w-[40px]">坛</span>
    </div>
    <div className="absolute left-[2px] top-[54px] text-[14px] leading-[16px] italic text-[#6f7d93] tracking-[1.4px] font-['Liberation_Sans',sans-serif] whitespace-nowrap">www.proewildfire.cn</div>
  </div>
);

export default function App() {
  return (
    <div className="w-[1771px] h-[1090px] overflow-hidden flex flex-col font-['Open_Sans','Noto_Sans_CJK_SC',sans-serif] text-[18px] text-[#333] bg-[#f8f9fb]">
      <div className="h-[10px] shrink-0 bg-[#dce0e0] flex items-end overflow-hidden relative">
        <div className="ml-[12px] w-[18px] h-[4px] bg-[#5cb5dc]" />
        <div className="ml-[1140px] text-[14px] leading-[6px] h-[6px] text-[#444]">(活动的)</div>
      </div>
      <div className="h-[40px] shrink-0 bg-[#3e4648] flex text-white text-[20px] items-stretch">
        <div className="w-[99px] bg-gradient-to-b from-[#6fcf45] to-[#4fa02f] flex items-center justify-center">文件</div>
        <div className="w-[108px] bg-[#f8f9fb] text-[#4d8a2f] flex items-center justify-center">模型</div>
        {tabs.map(([t, w]) => <div key={t} className={`${w} flex items-center justify-center shrink-0 text-[#f2f2f2]`}>{t}</div>)}
        <div className="w-[145px] flex items-center justify-center shrink-0 text-[#f2f2f2] text-[21px]">KeyShot</div>
      </div>
      <div className="h-[164px] shrink-0 bg-[#f8f9fb] flex pt-[3px] pl-[1px] overflow-hidden">
        <Group w="w-[251px]" label="操作">
          <Big w="w-[68px]" t="机构" dis>
            <S s={50} v={50}><Gear x={19} y={18} r={14} /><Gear x={31} y={32} r={16} /></S>
          </Big>
          <Big w="w-[74px]" t="重新生成" caret>
            <S s={50} v={50}>
              <Cube x={2} y={6} w={9} f="#fff" t="#b9e6f5" />
              <Cube x={2} y={21} w={9} f="#fff" t="#b9e6f5" />
              <Cube x={2} y={38} w={9} f="#fff" t="#b9e6f5" />
              <path d="M21 15c2-10 15-12 21-5M46 16c-2 9-14 11-20 5" stroke={DB} strokeWidth="4" />
              <path d="M37 12l9-1-1-9zM30 14l-9 1 2 9z" fill={DB} />
              <path d="M22 29h26M22 36h26M22 43h26" stroke="#9b9d9d" strokeWidth="3" />
            </S>
          </Big>
          <Col w="w-[107px]" pl="pl-[12px]">
            <Row n="copy" t="复制" dis />
            <Row n="paste" t="粘贴" dis caret />
            <Row n="del" t="删除" dis caret />
          </Col>
        </Group>
        <Group w="w-[160px]" label="获取数据">
          <Col w="w-[158px]" pl="pl-[11px]">
            <Row n="udf" t="用户定义特征" />
            <Row n="cgeom" t="复制几何" />
            <Row n="shrink" t="收缩包络" />
          </Col>
        </Group>
        <Group w="w-[166px]" label="主体">
          <Col w="w-[164px]" pl="pl-[9px]">
            <Row n="bool" t="布尔运算" gap="gap-[6px]" />
            <Row n="split" t="分割/修剪主体" gap="gap-[6px]" />
            <Row n="newb" t="新建主体" gap="gap-[6px]" />
          </Col>
        </Group>
        <Group w="w-[264px]" label="基准">
          <Big w="w-[70px]" t="平面"><S s={50}><path d="M6.5 4H22L17.5 20H2z" stroke={BR} strokeWidth="1.9" /></S></Big>
          <Col w="w-[96px]" pl="pl-[1px]">
            <Row n="axis" t="轴" />
            <Row n="pt" t="点" caret />
            <Row n="csys" t="坐标系" />
          </Col>
          <Col w="w-[96px]" pl="pl-[1px]">
            <Row n="sketch" t="草绘" gap="gap-[6px]" />
            <Row n="curve" t="曲线" caret gap="gap-[6px]" />
            <Row n="graph" t="图形" gap="gap-[6px]" />
          </Col>
        </Group>
        <Group w="w-[183px]" label="形状">
          <Big w="w-[68px]" t="拉伸">
            <S s={48} v={50}><path d="M2 18L17 1h30v32L31 48H2z" fill={LB} stroke="#aab" /><path d="M2 18h29v30H2z" fill="#f1f2f2" stroke="#b5b8b8" strokeWidth="2" /><path d="M31 18L47 1v32L31 48z" fill="#7fbcd6" /><path d="M2 18L17 1h30" stroke="#8bbfd3" /></S>
          </Big>
          <Col w="w-[113px]" pl="pl-[3px]">
            <Row n="rev" t="旋转" gap="gap-[6px]" />
            <Row n="sweep" t="扫描" caret gap="gap-[6px]" />
            <Row n="swb" t="扫描混合" gap="gap-[6px]" />
          </Col>
        </Group>
        <Group w="w-[225px]" label="工程">
          <Col w="w-[128px]" pl="pl-[11px]">
            <Row n="hole" t="孔" dis gap="gap-[6px]" />
            <Row n="round" t="倒圆角" dis caret gap="gap-[6px]" />
            <Row n="cham" t="倒角" dis caret gap="gap-[6px]" />
          </Col>
          <Col w="w-[95px]">
            <Row n="draft" t="拔模" dis caret />
            <Row n="shell" t="壳" dis />
            <Row n="rib" t="筋" dis caret />
          </Col>
        </Group>
        <Group w="w-[420px]" label="编辑">
          <Big w="w-[70px]" t="阵列" caret>
            <S s={48} v={50}><path d="M3 8l6-7h41v40l-6 8H3z" fill="#dcdede" /><rect x="3" y="8" width="41" height="41" fill="#eceeee" stroke="#d5d7d7" />{[13, 24, 35].flatMap(y => [12, 23, 34].map(x => <rect key={x * 100 + y} x={x} y={y} width="5" height="5" fill="#b9bbbb" />))}</S>
          </Big>
          <Col w="w-[78px]"><Row n="mirror" t="镜像" dis gap="gap-[6px]" /><Row n="trim" t="修剪" gap="gap-[6px]" /><Row n="merge" t="合并" dis gap="gap-[6px]" /></Col>
          <Col w="w-[78px]"><Row n="extend" t="延伸" dis /><Row n="offs" t="偏移" /><Row n="inter" t="相交" /></Col>
          <Col w="w-[96px]"><Row n="project" t="投影" /><Row n="thick" t="加厚" dis /><Row n="solid" t="实体化" dis /></Col>
          <Col w="w-[96px]"><Row n="remove" t="移除" /><Row n="sgeom" t="分割" dis caret /><Row n="warp" t="扭曲" /></Col>
        </Group>
        <Group w="w-[194px]" label="曲面" last>
          <Big w="w-[94px]" t="边界混合">
            <S s={50} v={50}><path d="M5 15C15 4 30 1 46 3L40 40C30 30 15 26 3 30z" fill="#d8f0f8" stroke="#6a9fb5" strokeWidth="1.4" /><path d="M24 5L18 29M4 17c12-3 26-2 38 4" stroke="#3f8fb0" strokeWidth="1.4" /></S>
          </Big>
          <Col w="w-[60px]"><Row n="extend" t="" /><Row n="split" t="" /><Row n="hole" t="" /></Col>
        </Group>
      </div>
      <QBar />
      <div className="flex-1 flex min-h-0">
        <Panel />
        <div className="flex-1 relative bg-gradient-to-b from-[#c6d9ea] to-[#6d8cb4] overflow-hidden">
          <Drawing />
          <FloatBar />
          <Watermark />
        </div>
      </div>
    </div>
  );
}
